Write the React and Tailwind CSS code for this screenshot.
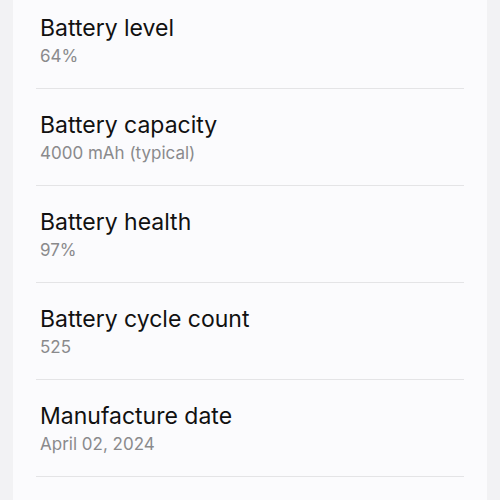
const items = [
  { title: 'Battery level', value: '64%' },
  { title: 'Battery capacity', value: '4000 mAh (typical)' },
  { title: 'Battery health', value: '97%' },
  { title: 'Battery cycle count', value: '525' },
  { title: 'Manufacture date', value: 'April 02, 2024' },
];

export default function App() {
  return (
    <div className="w-[500px] h-[500px] overflow-hidden bg-[#f2f2f4] px-[13px] font-['Inter',sans-serif]">
      <div className="h-[520px] bg-[#fbfbfd] px-[23px] -mt-[8px]">
        {items.map((it) => (
          <div key={it.title} className="border-b border-[#e4e4e6] pl-[4px] pt-[22px] pb-[19px]">
            <p className="text-[23px] leading-[28px] text-[#111111]">{it.title}</p>
            <p className="mt-[2px] text-[17px] leading-[25px] text-[#8a8a8c]">{it.value}</p>
          </div>
        ))}
      </div>
    </div>
  );
}
